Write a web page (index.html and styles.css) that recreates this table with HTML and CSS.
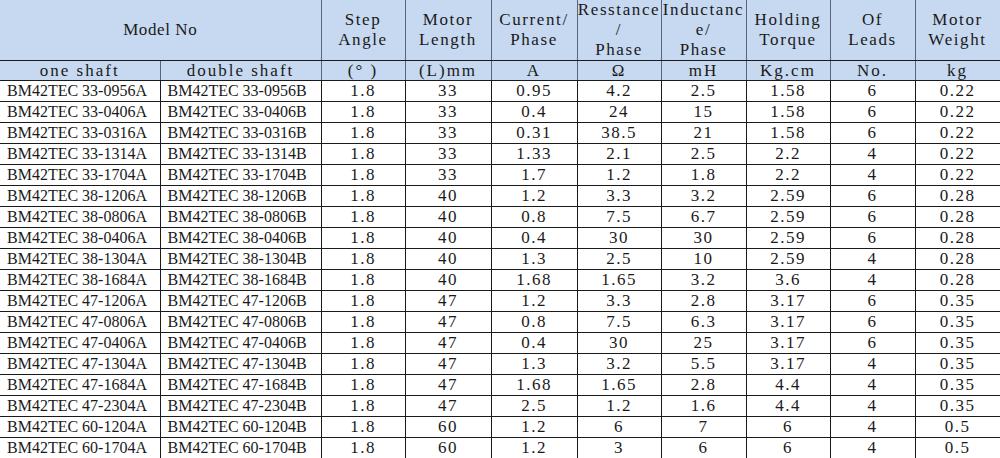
FILE: index.html
```html
<!DOCTYPE html>
<html>
<head>
<meta charset="utf-8">
<link rel="stylesheet" href="styles.css">
</head>
<body>
<table class="spec">
<colgroup>
<col class="c-model"><col class="c-model2"><col class="c84"><col class="c86"><col class="c86"><col class="c84"><col class="c85"><col class="c84"><col class="c85"><col class="c85">
</colgroup>
<thead>
<tr class="h1">
<th colspan="2" class="model">Model No</th>
<th>Step<br>Angle</th>
<th>Motor<br>Length</th>
<th>Current/<br>Phase</th>
<th>Resstance<br>/<br>Phase</th>
<th>Inductanc<br>e/<br>Phase</th>
<th>Holding<br>Torque</th>
<th>Of<br>Leads</th>
<th>Motor<br>Weight</th>
</tr>
<tr class="h2">
<th>one shaft</th>
<th>double shaft</th>
<th>(°&nbsp;)</th>
<th>(L)mm</th>
<th>A</th>
<th>Ω</th>
<th>mH</th>
<th>Kg.cm</th>
<th>No.</th>
<th>kg</th>
</tr>
</thead>
<tbody>
<tr><td class="l">BM42TEC 33-0956A</td><td class="l">BM42TEC 33-0956B</td><td>1.8</td><td>33</td><td>0.95</td><td>4.2</td><td>2.5</td><td>1.58</td><td>6</td><td>0.22</td></tr>
<tr><td class="l">BM42TEC 33-0406A</td><td class="l">BM42TEC 33-0406B</td><td>1.8</td><td>33</td><td>0.4</td><td>24</td><td>15</td><td>1.58</td><td>6</td><td>0.22</td></tr>
<tr><td class="l">BM42TEC 33-0316A</td><td class="l">BM42TEC 33-0316B</td><td>1.8</td><td>33</td><td>0.31</td><td>38.5</td><td>21</td><td>1.58</td><td>6</td><td>0.22</td></tr>
<tr><td class="l">BM42TEC 33-1314A</td><td class="l">BM42TEC 33-1314B</td><td>1.8</td><td>33</td><td>1.33</td><td>2.1</td><td>2.5</td><td>2.2</td><td>4</td><td>0.22</td></tr>
<tr><td class="l">BM42TEC 33-1704A</td><td class="l">BM42TEC 33-1704B</td><td>1.8</td><td>33</td><td>1.7</td><td>1.2</td><td>1.8</td><td>2.2</td><td>4</td><td>0.22</td></tr>
<tr><td class="l">BM42TEC 38-1206A</td><td class="l">BM42TEC 38-1206B</td><td>1.8</td><td>40</td><td>1.2</td><td>3.3</td><td>3.2</td><td>2.59</td><td>6</td><td>0.28</td></tr>
<tr><td class="l">BM42TEC 38-0806A</td><td class="l">BM42TEC 38-0806B</td><td>1.8</td><td>40</td><td>0.8</td><td>7.5</td><td>6.7</td><td>2.59</td><td>6</td><td>0.28</td></tr>
<tr><td class="l">BM42TEC 38-0406A</td><td class="l">BM42TEC 38-0406B</td><td>1.8</td><td>40</td><td>0.4</td><td>30</td><td>30</td><td>2.59</td><td>6</td><td>0.28</td></tr>
<tr><td class="l">BM42TEC 38-1304A</td><td class="l">BM42TEC 38-1304B</td><td>1.8</td><td>40</td><td>1.3</td><td>2.5</td><td>10</td><td>2.59</td><td>4</td><td>0.28</td></tr>
<tr><td class="l">BM42TEC 38-1684A</td><td class="l">BM42TEC 38-1684B</td><td>1.8</td><td>40</td><td>1.68</td><td>1.65</td><td>3.2</td><td>3.6</td><td>4</td><td>0.28</td></tr>
<tr><td class="l">BM42TEC 47-1206A</td><td class="l">BM42TEC 47-1206B</td><td>1.8</td><td>47</td><td>1.2</td><td>3.3</td><td>2.8</td><td>3.17</td><td>6</td><td>0.35</td></tr>
<tr><td class="l">BM42TEC 47-0806A</td><td class="l">BM42TEC 47-0806B</td><td>1.8</td><td>47</td><td>0.8</td><td>7.5</td><td>6.3</td><td>3.17</td><td>6</td><td>0.35</td></tr>
<tr><td class="l">BM42TEC 47-0406A</td><td class="l">BM42TEC 47-0406B</td><td>1.8</td><td>47</td><td>0.4</td><td>30</td><td>25</td><td>3.17</td><td>6</td><td>0.35</td></tr>
<tr><td class="l">BM42TEC 47-1304A</td><td class="l">BM42TEC 47-1304B</td><td>1.8</td><td>47</td><td>1.3</td><td>3.2</td><td>5.5</td><td>3.17</td><td>4</td><td>0.35</td></tr>
<tr><td class="l">BM42TEC 47-1684A</td><td class="l">BM42TEC 47-1684B</td><td>1.8</td><td>47</td><td>1.68</td><td>1.65</td><td>2.8</td><td>4.4</td><td>4</td><td>0.35</td></tr>
<tr><td class="l">BM42TEC 47-2304A</td><td class="l">BM42TEC 47-2304B</td><td>1.8</td><td>47</td><td>2.5</td><td>1.2</td><td>1.6</td><td>4.4</td><td>4</td><td>0.35</td></tr>
<tr><td class="l">BM42TEC 60-1204A</td><td class="l">BM42TEC 60-1204B</td><td>1.8</td><td>60</td><td>1.2</td><td>6</td><td>7</td><td>6</td><td>4</td><td>0.5</td></tr>
<tr><td class="l">BM42TEC 60-1704A</td><td class="l sel">BM42TEC 60-1704B</td><td>1.8</td><td>60</td><td>1.2</td><td>3</td><td>6</td><td>6</td><td>4</td><td>0.5</td></tr>
</tbody>
</table>
</body>
</html>
```
FILE: styles.css
```css
html, body {
  margin: 0;
  padding: 0;
  background: #ffffff;
}
.spec {
  border-collapse: collapse;
  table-layout: fixed;
  width: 1000px;
  font-family: "Liberation Serif", "Noto Sans CJK SC", serif;
  font-size: 17px;
  color: #1a1a1a;
}
.c-model { width: 160px; }
.c-model2 { width: 161px; }
.c84 { width: 84px; }
.c85 { width: 85px; }
.c86 { width: 86px; }
.spec th, .spec td {
  padding: 0;
  text-align: center;
  font-weight: normal;
  border: 1px solid #1a1a1a;
  white-space: nowrap;
  overflow: hidden;
}
.spec th {
  background: #c6d9f0;
  border-left-color: #5a6478;
  border-right-color: #5a6478;
  letter-spacing: 1.6px;
}
.spec th.model {
  letter-spacing: 0.6px;
}
.spec .h1 th {
  height: 59px;
  line-height: 20px;
  border-top: none;
}
.spec .h2 th {
  height: 19px;
  line-height: 19px;
  letter-spacing: 2px;
}
.spec td {
  height: 20px;
  line-height: 20px;
  letter-spacing: 1.5px;
}
.spec td.l {
  text-align: left;
  padding-left: 7px;
  font-size: 16px;
  letter-spacing: 0;
}
.spec th:first-child, .spec td:first-child { border-left: none; }
.spec tbody tr:last-child td { border-bottom: none; }
.spec td.sel {
  border-left-color: #6f9a6f;
  border-bottom: 1px solid #6f9a6f;
}
```
